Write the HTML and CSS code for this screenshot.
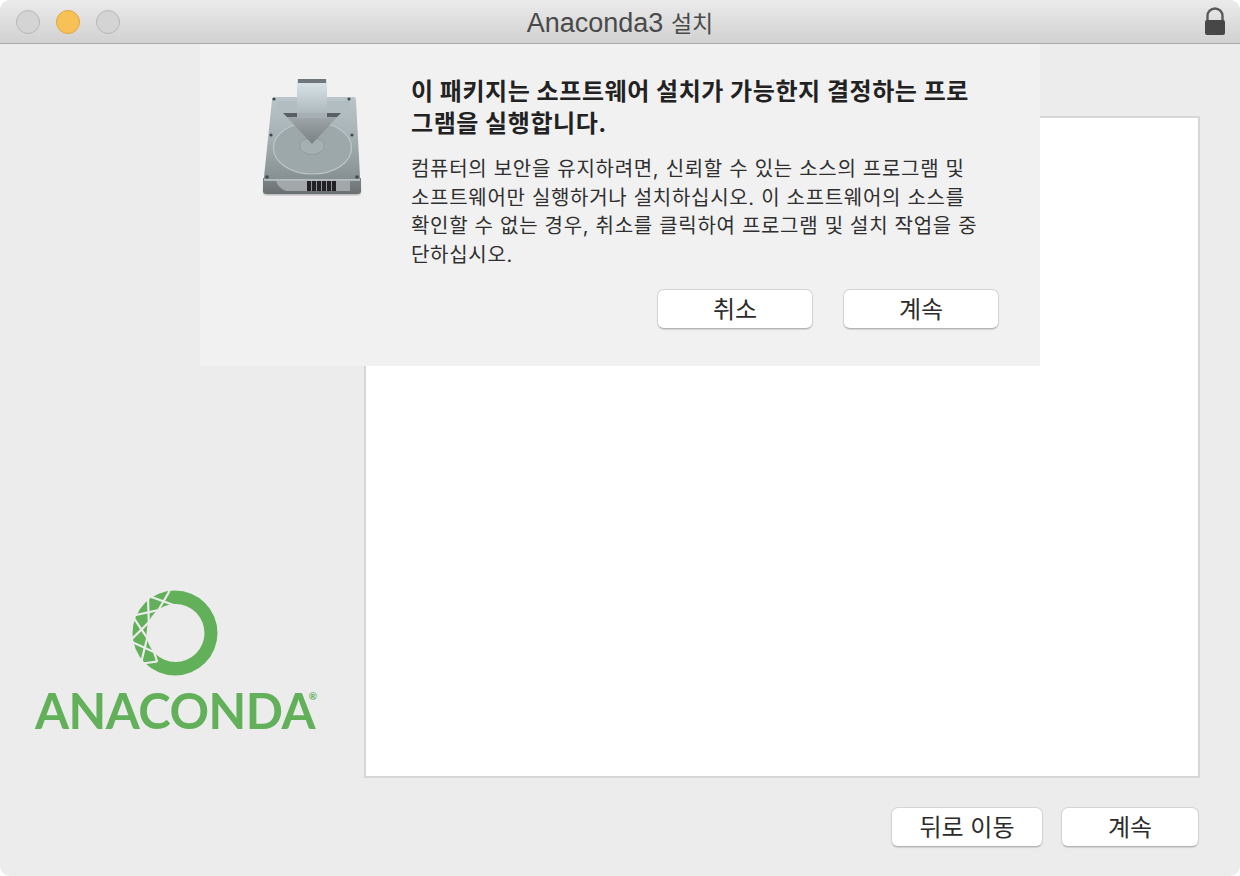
FILE: index.html
```html
<!DOCTYPE html>
<html lang="ko">
    <head>
        <meta charset="utf-8">
        <title>Anaconda3 설치</title>
        <link rel="stylesheet" href="styles.css">
    </head>
    <body>
        <main class="window">
            <header class="titlebar">
                <div class="lights">
                    <span class="light"></span>
                    <span class="light light-min"></span>
                    <span class="light"></span>
                </div>
                <h1 class="title">Anaconda3 <span class="title-ko">설치</span></h1>
                <svg class="lock" width="24" height="32" viewBox="0 0 24 32">
                    <path d="M4.500 15V10a7.500 7.500 0 0 1 15 0v5" fill="none" stroke="#5a5a5a" stroke-width="2.400"/>
                    <rect x="2" y="14" width="20" height="15" rx="2" fill="#474747"/>
                </svg>
            </header>

            <div class="content">
                <div class="panes">
                    <div class="brand">
                        <svg class="ring" width="90" height="90" viewBox="0 0 90 90">
                            <defs>
                                <clipPath id="lattice-clip">
                                    <path d="M40 -5 L40 3 L47 15 L30 70 L22 81 L22 95 L-5 95 L-5 -5 Z"/>
                                </clipPath>
                                <g id="cross">
                                    <path d="M45 -1 L62 24"/>
                                    <path d="M45 -1 L28 24"/>
                                </g>
                            </defs>
                            <path d="M45 2.500a42.500 42.500 0 1 0 0 85a42.500 42.500 0 1 0 0-85z M45.500 16a29 29 0 1 1 0 58a29 29 0 1 1 0-58z" fill="#63b05a" fill-rule="evenodd"/>
                            <g clip-path="url(#lattice-clip)" fill="none" stroke="#ececec" stroke-width="2.200">
                                <use href="#cross" transform="rotate(-4 45 45)"/>
                                <use href="#cross" transform="rotate(-36 45 45)"/>
                                <use href="#cross" transform="rotate(-68 45 45)"/>
                                <use href="#cross" transform="rotate(-100 45 45)"/>
                                <use href="#cross" transform="rotate(-132 45 45)"/>
                                <use href="#cross" transform="rotate(-164 45 45)"/>
                            </g>
                        </svg>
                        <div class="wordmark">ANACONDA<span class="reg">®</span></div>
                    </div>
                    <div class="readme"></div>
                </div>
                <div class="actions">
                    <button class="btn btn-back" type="button">뒤로 이동</button>
                    <button class="btn btn-next" type="button">계속</button>
                </div>
            </div>

            <section class="sheet">
                <svg class="disk" width="140" height="150" viewBox="240 60 140 150">
                    <defs>
                        <linearGradient id="disk-top" x1="0" y1="0" x2="0" y2="1">
                            <stop offset="0" stop-color="#bac5c9"/>
                            <stop offset="0.5" stop-color="#a5b0b3"/>
                            <stop offset="1" stop-color="#858f91"/>
                        </linearGradient>
                        <linearGradient id="disk-front" x1="0" y1="0" x2="0" y2="1">
                            <stop offset="0" stop-color="#7e8586"/>
                            <stop offset="1" stop-color="#6a7071"/>
                        </linearGradient>
                        <linearGradient id="shaft-fill" x1="0" y1="0" x2="0" y2="1">
                            <stop offset="0" stop-color="#dde8ec"/>
                            <stop offset="1" stop-color="#aeb9bd"/>
                        </linearGradient>
                        <linearGradient id="head-fill" x1="0" y1="0" x2="0" y2="1">
                            <stop offset="0" stop-color="#a4abae"/>
                            <stop offset="1" stop-color="#7b8284"/>
                        </linearGradient>
                        <filter id="soft"><feGaussianBlur stdDeviation="0.400"/></filter>
                        <filter id="shadow"><feGaussianBlur stdDeviation="1.600"/></filter>
                    </defs>
                    <rect x="264" y="186" width="96" height="9" rx="3" fill="#555" opacity="0.5" filter="url(#shadow)"/>
                    <g filter="url(#soft)">
                        <path d="M263 178 L361 178 L361 191 Q361 194 358 194 L266 194 Q263 194 263 191 Z" fill="url(#disk-front)"/>
                        <path d="M276 181 L307 181 L307 191 L286 191 Q278 188 276 181 Z" fill="#a2a8a9"/>
                        <path d="M336 181 L350 181 L350 191 L336 191 Z" fill="#a2a8a9"/>
                        <path d="M275 97 Q272 97 272 100 L264 177 L264 180 L360 180 L360 177 L356 100 Q356 97 353 97 Z" fill="url(#disk-top)"/>
                        <path d="M264 180 L360 180" stroke="#e9eeee" stroke-width="1.200"/>
                        <path d="M278 101 L350 101 L352 115 L276 115 Z" fill="#b2bdc1"/>
                        <ellipse cx="312.500" cy="148" rx="39" ry="26" fill="#9da8ab" stroke="#bdc6c9" stroke-width="1.200"/>
                        <ellipse cx="312" cy="146" rx="12.500" ry="8.500" fill="#a5b0b3" stroke="#8a9598" stroke-width="0.800"/>
                        <g fill="#3f4a50">
                            <circle cx="274" cy="99" r="1.600"/>
                            <circle cx="349" cy="99" r="1.600"/>
                            <circle cx="271" cy="135" r="1.600"/>
                            <circle cx="352" cy="135" r="1.600"/>
                            <circle cx="267" cy="177" r="1.800"/>
                            <circle cx="357" cy="177" r="1.800"/>
                        </g>
                        <path d="M307 181h29v10h-29z" fill="#222425"/>
                        <path d="M311.500 181v10M316.500 181v10M321.500 181v10M326.500 181v10M331.500 181v10" stroke="#8d9495" stroke-width="1"/>
                        <path d="M297 79 L327 79 L327 113 L297 113 Z" fill="url(#shaft-fill)"/>
                        <path d="M283 113 L341 113 L312 144 Z" fill="url(#head-fill)"/>
                        <path d="M298 79h28v4h-28z" fill="#70777a"/>
                        <path d="M283 113 L297 113 L297 117 L287 117 Z M327 113 L341 113 L337 117 L327 117 Z" fill="#596063"/>
                        <path d="M297 113 L327 113 L327 118 L297 118 Z" fill="#a6b0b3"/>
                    </g>
                </svg>
                <div class="message">
                    <h2 class="message-head">이 패키지는 소프트웨어 설치가 가능한지 결정하는 프로<br>그램을 실행합니다.</h2>
                    <p class="message-body">컴퓨터의 보안을 유지하려면, 신뢰할 수 있는 소스의 프로그램 및<br>소프트웨어만 실행하거나 설치하십시오. 이 소프트웨어의 소스를<br>확인할 수 없는 경우, 취소를 클릭하여 프로그램 및 설치 작업을 중<br>단하십시오.</p>
                    <div class="sheet-actions">
                        <button class="btn btn-sheet" type="button">취소</button>
                        <button class="btn btn-sheet" type="button">계속</button>
                    </div>
                </div>
            </section>
        </main>
    </body>
</html>
```

FILE: styles.css
```css
html, body{
    margin:0;
    padding:0;
    background-color:#fff;
}
body{
    font-family:Inter, "Noto Sans CJK KR", sans-serif;
    color:#2b2b2b;
}
.window{
    position:relative;
    display:flex;
    flex-direction:column;
    width:1240px;
    height:876px;
    border-radius:10px;
    overflow:hidden;
    background-color:#ececec;
}
.titlebar{
    display:flex;
    align-items:center;
    justify-content:center;
    position:relative;
    flex:none;
    box-sizing:border-box;
    height:44px;
    background:linear-gradient(#ebebeb, #d1d1d1);
    border-bottom:1px solid #a9a9a9;
}
.lights{
    position:absolute;
    left:16px;
    top:10px;
    display:flex;
    gap:16px;
}
.light{
    box-sizing:border-box;
    width:24px;
    height:24px;
    border-radius:50%;
    border:1px solid #b6b6b6;
    background-color:#d4d4d4;
}
.light-min{
    border-color:#e2a63f;
    background-color:#f8c158;
}
.title{
    margin:0;
    font-family:"Liberation Sans", "Noto Sans CJK KR", sans-serif;
    font-size:27px;
    font-weight:400;
    color:#4a4a4a;
}
.title-ko{
    font-family:"Noto Sans CJK KR", sans-serif;
    font-size:23px;
}
.lock{
    position:absolute;
    right:13px;
    top:6px;
}
.content{
    flex:1;
    display:flex;
    flex-direction:column;
    padding:72px 41px 29px 0;
    min-height:0;
}
.panes{
    flex:1;
    display:flex;
    min-height:0;
}
.brand{
    flex:none;
    width:350px;
    margin-right:14px;
    display:flex;
    flex-direction:column;
    align-items:center;
    justify-content:flex-end;
    padding-bottom:39px;
    box-sizing:border-box;
}
.ring{
    display:block;
}
.wordmark{
    position:relative;
    margin-top:3px;
    font-family:Lato, sans-serif;
    font-weight:700;
    font-size:49px;
    line-height:58px;
    letter-spacing:-0.500px;
    color:#63b05a;
    white-space:nowrap;
}
.reg{
    position:absolute;
    right:-2px;
    top:9px;
    font-size:10px;
    line-height:12px;
    letter-spacing:0;
}
.readme{
    flex:1;
    box-sizing:border-box;
    border:2px solid #d6d6d6;
    margin-right:-1px;
    background-color:#fff;
}
.actions{
    flex:none;
    display:flex;
    justify-content:flex-end;
    gap:18px;
    margin-top:29px;
}
.btn{
    box-sizing:border-box;
    height:40px;
    padding:0 0 3px;
    border:1px solid #d4d4d4;
    border-bottom-color:#b4b4b4;
    border-radius:7px;
    background-color:#fff;
    box-shadow:0 1px 1px rgba(0,0,0,0.12);
    font-family:inherit;
    font-size:24px;
    color:#2b2b2b;
}
.btn-back{
    width:152px;
}
.btn-next{
    width:138px;
}
.btn-sheet{
    width:156px;
}
.sheet{
    position:absolute;
    left:200px;
    top:44px;
    width:840px;
    height:322px;
    display:flex;
    box-sizing:border-box;
    background-color:#f1f1f1;
}
.disk{
    position:absolute;
    left:40px;
    top:16px;
}
.message{
    margin-left:211px;
    padding-top:32px;
    width:590px;
}
.message-head{
    margin:0;
    font-size:24px;
    line-height:32px;
    letter-spacing:0.550px;
    font-weight:700;
    color:#222;
    white-space:nowrap;
}
.message-body{
    margin:15px 0 0;
    font-size:20px;
    line-height:28.500px;
    letter-spacing:0.700px;
    color:#2f2f2f;
    white-space:nowrap;
}
.sheet-actions{
    display:flex;
    justify-content:flex-end;
    gap:30px;
    margin-top:20px;
    padding-right:2px;
}
```
